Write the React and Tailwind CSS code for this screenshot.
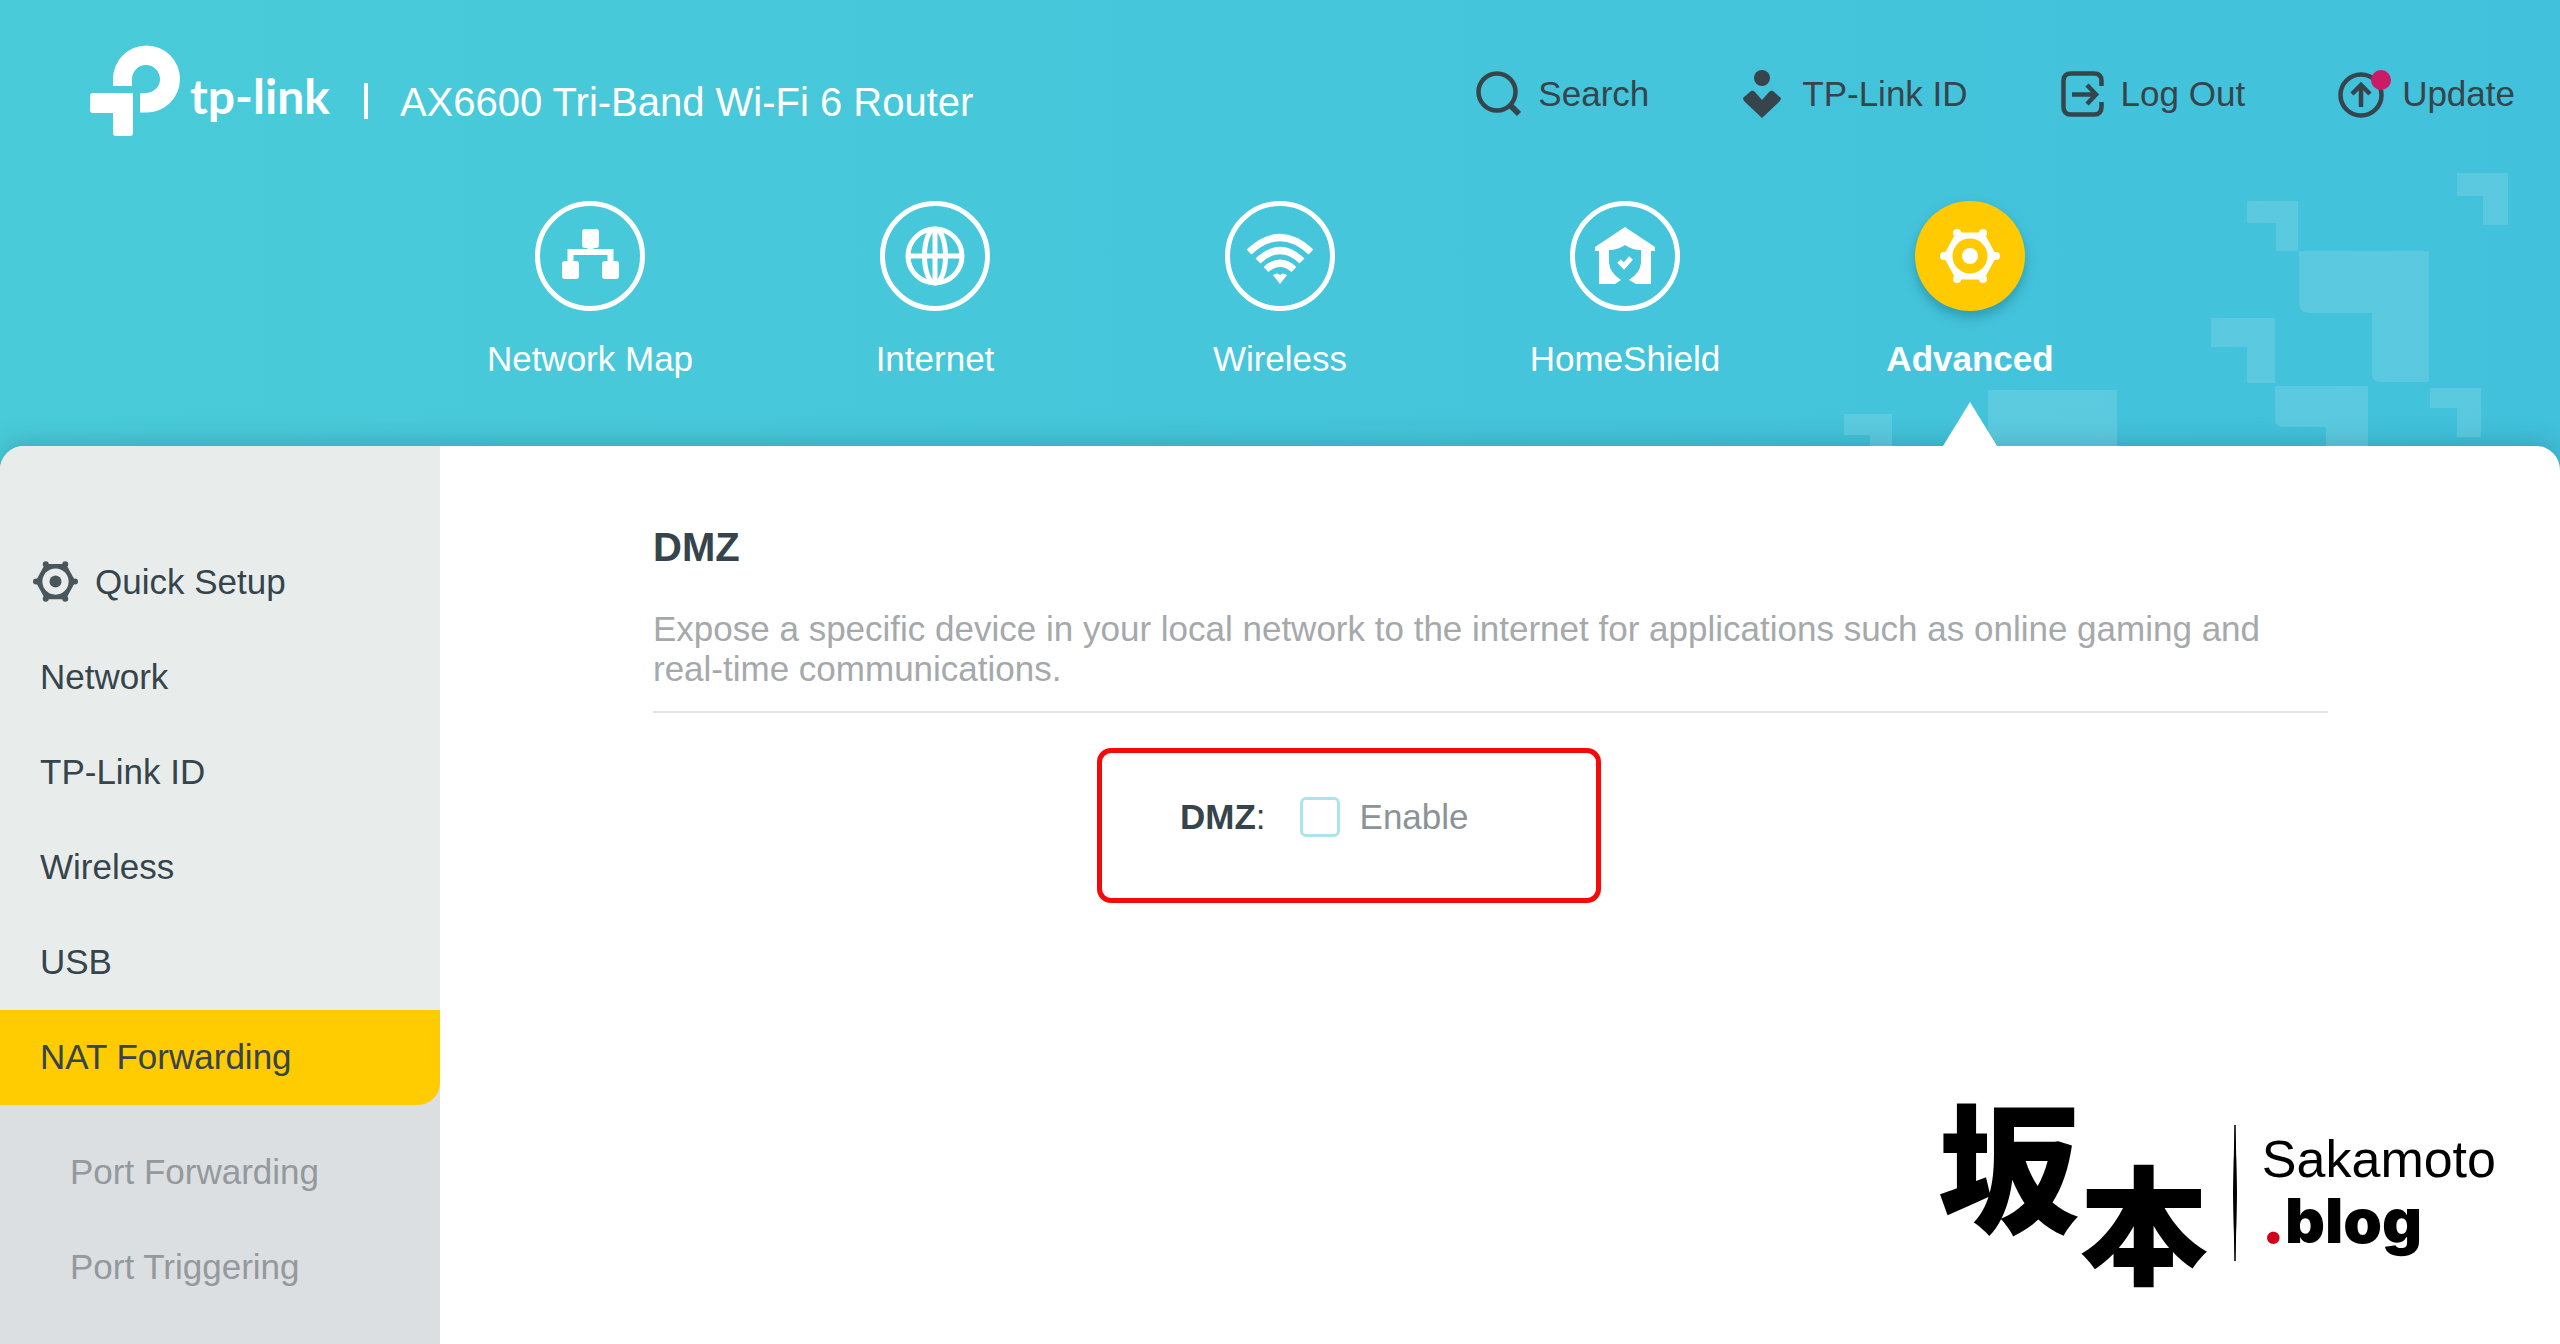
import React, { useState } from 'react'

const NAV = [
  { label: 'Network Map', icon: MapIcon },
  { label: 'Internet', icon: GlobeIcon },
  { label: 'Wireless', icon: WifiIcon },
  { label: 'HomeShield', icon: HomeShieldIcon },
  { label: 'Advanced', icon: GearIcon },
]

const ACTIONS = [
  { label: 'Search', icon: SearchIcon, gap: 'gap-[16px]' },
  { label: 'TP-Link ID', icon: PersonIcon, gap: 'gap-[20px]' },
  { label: 'Log Out', icon: LogOutIcon, gap: 'gap-[16px]' },
  { label: 'Update', icon: UpdateIcon, gap: 'gap-[10px]' },
]

const MENU = ['Quick Setup', 'Network', 'TP-Link ID', 'Wireless', 'USB', 'NAT Forwarding']
const SUBMENU = ['Port Forwarding', 'Port Triggering']

function MapIcon() {
  return (
    <svg viewBox="0 0 60 60" className="size-[60px]" fill="currentColor">
      <rect x="22" y="3" width="17" height="19" rx="3" />
      <rect x="2" y="35" width="17" height="18" rx="3" />
      <rect x="42" y="35" width="17" height="18" rx="3" />
      <path d="M10.500 38V26H50.500V38M30.500 18V26" fill="none" stroke="currentColor" strokeWidth="6" />
    </svg>
  )
}

function GlobeIcon() {
  return (
    <svg viewBox="0 0 60 60" className="size-[60px]" fill="none" stroke="currentColor" strokeWidth="5">
      <circle cx="30" cy="30" r="27" />
      <ellipse cx="30" cy="30" rx="10.500" ry="27" />
      <path d="M30 3V57M3 30H57" />
    </svg>
  )
}

function WifiIcon() {
  return (
    <svg viewBox="0 0 68 60" className="h-[60px] w-[68px]" fill="none" stroke="currentColor" strokeWidth="7">
      <path d="M3 26Q34 -3 65 26" />
      <path d="M12 35Q34 14 56 35" />
      <path d="M20 43.500Q34 31 48 43.500" />
      <path d="M27 49Q31 46 34 49Q37 46 41 49L34 58Z" fill="currentColor" stroke="none" />
    </svg>
  )
}

function HomeShieldIcon() {
  return (
    <svg viewBox="0 0 60 60" className="size-[60px]">
      <path
        d="M30 1L60 21V25H56V58H41L34 54Q45 47 46 37V24Q37 24 30 19Q23 24 14 24V37Q15 47 26 54L20 58H4V25H0V21Z"
        fill="currentColor"
      />
      <path d="M24 35L29 40L36 32" fill="none" stroke="currentColor" strokeWidth="5" />
    </svg>
  )
}

function GearIcon({ size = 'size-[60px]' }) {
  return (
    <svg viewBox="0 0 60 60" className={size} fill="none" stroke="currentColor">
      <mask id="gearHole">
        <rect width="60" height="60" fill="white" stroke="none" />
        <circle cx="30" cy="30" r="17.500" fill="black" stroke="none" />
      </mask>
      <path d="M17 8H43L55 30L43 52H17L5 30Z" strokeWidth="3" strokeLinejoin="round" fill="currentColor" mask="url(#gearHole)" />
      <g fill="currentColor" stroke="none">
        <circle cx="30" cy="30" r="8" />
        <circle cx="17" cy="7" r="4" />
        <circle cx="43" cy="7" r="4" />
        <circle cx="56" cy="30" r="4" />
        <circle cx="43" cy="53" r="4" />
        <circle cx="17" cy="53" r="4" />
        <circle cx="4" cy="30" r="4" />
      </g>
    </svg>
  )
}

function SearchIcon() {
  return (
    <svg viewBox="0 0 46 46" className="size-[46px]" fill="none" stroke="currentColor" strokeWidth="4.500">
      <circle cx="21" cy="21" r="18.500" />
      <path d="M34 34L43 43" strokeWidth="6" />
    </svg>
  )
}

function PersonIcon() {
  return (
    <svg viewBox="0 0 40 48" className="h-[48px] w-[40px]" fill="currentColor">
      <circle cx="20" cy="8" r="8" />
      <path d="M9 21Q11 20 13 22L20 30L27 22Q29 20 31 21L39 28Q39 30 37 32L20 48L3 32Q1 30 1 28Z" />
    </svg>
  )
}

function LogOutIcon() {
  return (
    <svg viewBox="0 0 44 46" className="h-[46px] w-[44px]" fill="none" stroke="currentColor" strokeWidth="4.500">
      <path d="M40.500 15V10Q40.500 2.500 33 2.500H10Q2.500 2.500 2.500 10V36Q2.500 43.500 10 43.500H33Q40.500 43.500 40.500 36V31" />
      <path d="M11 23.500H34M26 14L35 23.500L26 33" />
    </svg>
  )
}

function UpdateIcon() {
  return (
    <svg viewBox="0 0 54 50" className="h-[50px] w-[54px]" fill="none" stroke="currentColor" strokeWidth="4.500">
      <circle cx="23" cy="26" r="20.500" />
      <path d="M23 38V16M14 25L23 16L32 25" />
      <circle cx="43" cy="11" r="10" fill="#cc1a66" stroke="none" />
    </svg>
  )
}

function Brand() {
  return (
    <a href="#home" className="flex items-end text-white">
      <svg viewBox="0 0 92 92" className="h-[92px] w-[92px]" fill="currentColor">
        <path d="M23 41V34A33.500 33.500 0 1 1 56.500 67.500H50V48H56.500A14 14 0 1 0 42 34V41Z" />
        <path d="M3 48H43V88Q43 91 40 91H26Q23 91 23 88V68H3Q0 68 0 65V51Q0 48 3 48Z" />
      </svg>
      <span className="mb-[13px] ml-[8px] text-[48px] leading-[56px] font-[Lato] font-bold">tp-link</span>
    </a>
  )
}

// pale stepped blocks behind the right end of the header
function HeaderBlocks() {
  return (
    <svg viewBox="0 0 720 446" className="absolute top-0 right-0 h-[446px] w-[720px]" fill="white" fillOpacity="0.130">
      <path d="M617 173H668V225H643V196H617Z" />
      <path d="M407 201H458V251H436V223H407Z" />
      <path d="M459 251H589V382H540Q532 382 532 374V313H470Q459 313 459 302Z" />
      <path d="M371 318H435V383H407V347H371Z" />
      <path d="M435 386H528V446H486V427H443Q435 427 435 419Z" />
      <path d="M590 388H641V437H617V408H590Z" />
      <path d="M148 390H277V446H148Z" />
      <path d="M4 414H52V446H30V435H4Z" />
    </svg>
  )
}

function Watermark() {
  return (
    <div className="flex items-center text-black">
      <div className="flex pb-[12px] font-['Noto_Sans_CJK_JP',sans-serif] font-black">
        <span className="text-[142px] leading-[142px]">坂</span>
        <span className="mt-[66px] text-[128px] leading-[128px]">本</span>
      </div>
      <svg viewBox="0 0 6 136" className="mx-[24px] h-[136px] w-[6px]">
        <path d="M3 0Q6 68 3 136Q0 68 3 0Z" stroke="currentColor" strokeWidth="1" />
      </svg>
      <div>
        <p className="text-[52px] leading-[56px]">Sakamoto</p>
        <p className="font-[Inter] text-[62px] leading-[68px] font-black">
          <span className="text-[#d0021b]">.</span>blog
        </p>
      </div>
    </div>
  )
}

export default function App() {
  const [enabled, setEnabled] = useState(false)

  return (
    <div className="flex min-h-screen flex-col bg-linear-to-r from-[#4acbd9] to-[#42c1dc] font-['Liberation_Sans',Arial,sans-serif] text-[35px] leading-[40px] text-[#36444b]">
      <header className="relative">
        <HeaderBlocks />
        <div className="relative flex items-start justify-between pt-[45px] pr-[45px] pl-[90px]">
          <div className="flex items-end text-white">
            <Brand />
            <span className="mb-[18px] ml-[34px] h-[36px] w-[4px] bg-white" />
            <h1 className="mb-[13px] ml-[32px] text-[40px] leading-[44px]">AX6600 Tri-Band Wi-Fi 6 Router</h1>
          </div>
          <div className="mt-[24px] flex gap-[93px]">
            {ACTIONS.map(({ label, icon: Icon, gap }) => (
              <button key={label} className={`flex h-[50px] items-center ${gap}`}>
                <Icon />
                {label}
              </button>
            ))}
          </div>
        </div>

        <nav className="relative mx-auto mt-[64px] grid h-[245px] max-w-[1725px] grid-cols-5 text-white">
          {NAV.map(({ label, icon: Icon }) => {
            const active = label === 'Advanced'
            return (
              <a key={label} href={`#${label}`} className="flex flex-col items-center">
                <span
                  className={
                    active
                      ? 'flex size-[110px] items-center justify-center rounded-full bg-[#ffcb00] shadow-[0_6px_12px_rgba(0,80,100,0.35)]'
                      : 'flex size-[110px] items-center justify-center rounded-full border-5 border-white'
                  }
                >
                  <Icon />
                </span>
                <span className={active ? 'mt-[28px] font-bold' : 'mt-[28px]'}>{label}</span>
                {active && <span className="mt-auto h-[44px] w-[54px] bg-white [clip-path:polygon(50%_0,100%_100%,0_100%)]" />}
              </a>
            )
          })}
        </nav>
      </header>

      <div className="flex grow overflow-hidden rounded-t-[24px] bg-white shadow-[0_-4px_24px_rgba(30,110,120,0.35)]">
        <aside className="flex w-[440px] shrink-0 flex-col bg-[#e8edec] pt-[89px]">
          {MENU.map((item) => (
            <a
              key={item}
              href={`#${item}`}
              className={
                item === 'NAT Forwarding'
                  ? 'flex h-[95px] items-center bg-[#dcdfe1]'
                  : item === 'Quick Setup'
                    ? 'flex h-[95px] items-center gap-[17px] pb-[2px] pl-[33px]'
                    : 'flex h-[95px] items-center pb-[2px] pl-[40px]'
              }
            >
              {item === 'Quick Setup' && (
                <span className="text-[#49565c]">
                  <GearIcon size="size-[45px]" />
                </span>
              )}
              {item === 'NAT Forwarding' ? (
                <span className="flex h-full w-full items-center rounded-br-[22px] bg-[#ffcc02] pb-[2px] pl-[40px]">{item}</span>
              ) : (
                item
              )}
            </a>
          ))}
          <div className="grow bg-[#dcdfe1] pt-[20px] text-[#93999c]">
            {SUBMENU.map((item) => (
              <a key={item} href={`#${item}`} className="flex h-[95px] items-center pb-[2px] pl-[70px]">
                {item}
              </a>
            ))}
          </div>
        </aside>

        <main className="flex grow flex-col pt-[76px] pr-[232px] pl-[213px]">
          <h2 className="text-[40px] leading-[50px] font-bold">DMZ</h2>
          <p className="mt-[37px] text-[#a5a9ab]">
            Expose a specific device in your local network to the internet for applications such as online gaming and
            real-time communications.
          </p>
          <hr className="mt-[22px] border-t-2 border-[#e1e5e5]" />

          <div className="mt-[35px] ml-[444px] flex h-[155px] w-[504px] items-start rounded-[14px] border-5 border-[#f50a0a] pt-[44px] pl-[78px]">
            <span>
              <b>DMZ</b>:
            </span>
            <label className="ml-[34px] flex items-center gap-[20px] text-[#8c9396]">
              <input
                type="checkbox"
                checked={enabled}
                onChange={(e) => setEnabled(e.target.checked)}
                className="size-[40px] appearance-none rounded-[6px] border-3 border-[#a9e5ea] checked:bg-[#4acbd9]"
              />
              Enable
            </label>
          </div>

          <div className="mt-auto -mr-[168px] mb-[48px] self-end">
            <Watermark />
          </div>
        </main>
      </div>
    </div>
  )
}
